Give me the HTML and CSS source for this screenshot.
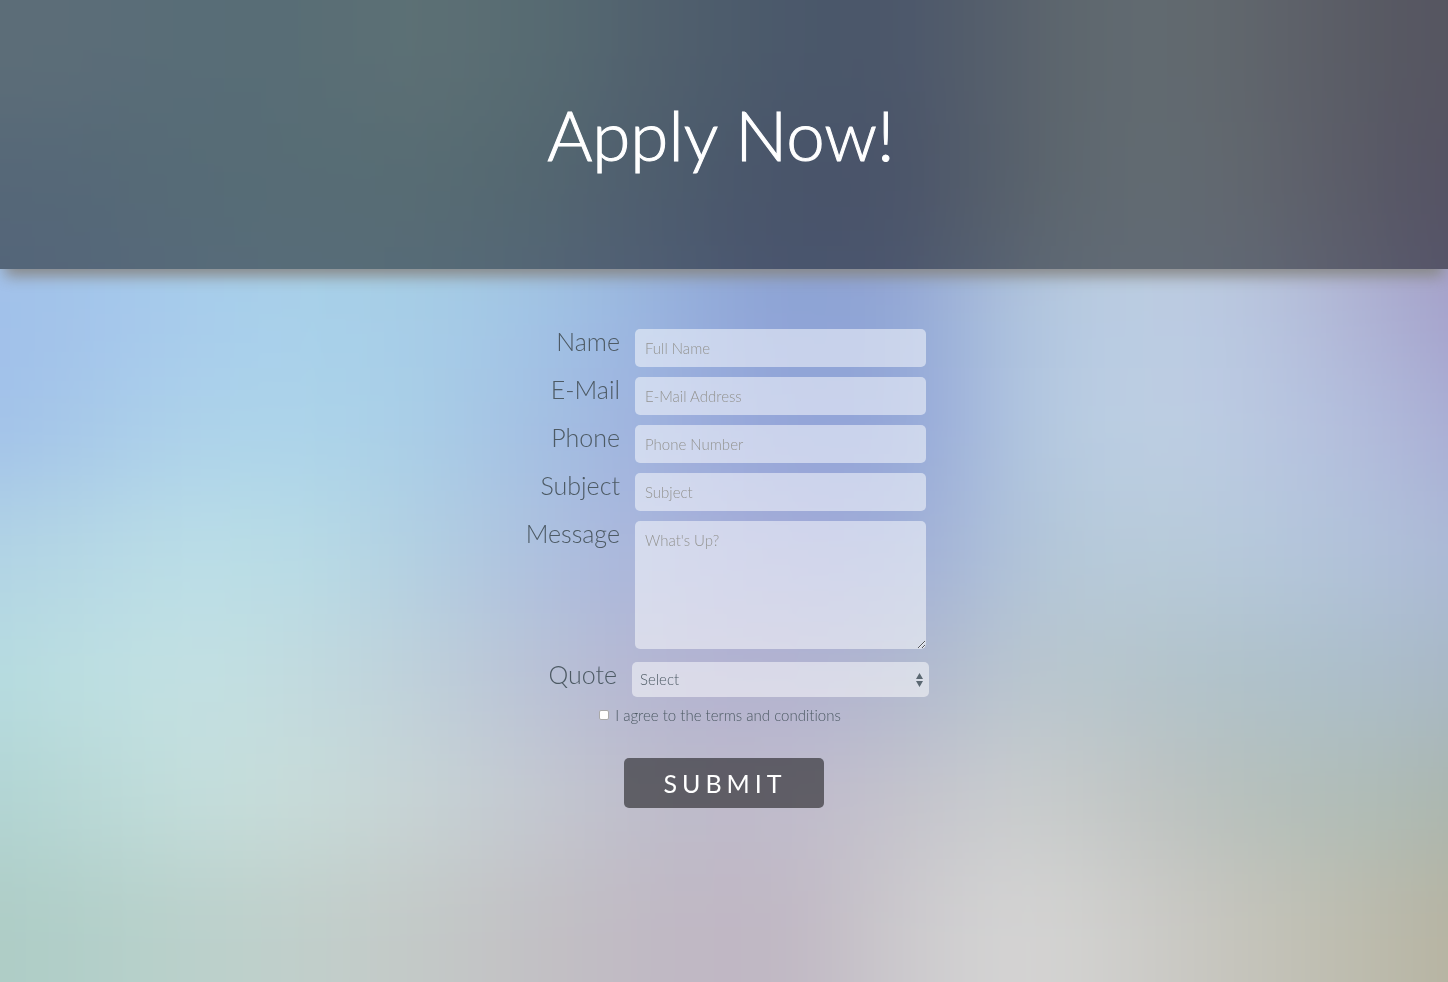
FILE: index.html
```html
<!DOCTYPE html>
<html lang="en">
<head>
<meta charset="utf-8">
<meta name="viewport" content="width=device-width, initial-scale=1">
<title>Apply Now!</title>
<link rel="stylesheet" href="styles.css">
</head>
<body>
<div class="backdrop" aria-hidden="true">
  <div class="backdrop-bands">
    <div class="band band-1"></div>
    <div class="band band-2"></div>
    <div class="band band-3"></div>
    <div class="band band-4"></div>
    <div class="band band-5"></div>
    <div class="band band-6"></div>
    <div class="band band-7"></div>
    <div class="band band-8"></div>
  </div>
</div>
<header class="banner">
  <h1 class="banner-title">Apply Now!</h1>
</header>
<main>
  <form class="apply-form">
    <div class="row">
      <label class="row-label" for="name">Name</label>
      <input class="field" id="name" type="text" placeholder="Full Name">
    </div>
    <div class="row">
      <label class="row-label" for="email">E-Mail</label>
      <input class="field" id="email" type="email" placeholder="E-Mail Address">
    </div>
    <div class="row">
      <label class="row-label" for="phone">Phone</label>
      <input class="field" id="phone" type="tel" placeholder="Phone Number">
    </div>
    <div class="row">
      <label class="row-label" for="subject">Subject</label>
      <input class="field" id="subject" type="text" placeholder="Subject">
    </div>
    <div class="row">
      <label class="row-label" for="message">Message</label>
      <textarea class="field field-message" id="message" placeholder="What's Up?"></textarea>
    </div>
    <div class="row row-quote">
      <label class="row-label" for="quote">Quote</label>
      <div class="select-wrap">
        <select class="select" id="quote"><option>Select</option></select>
        <svg class="select-arrows" viewBox="0 0 7 14" width="7" height="14" aria-hidden="true"><path d="M3.500 0 7 6H0zM0 8h7L3.500 14z"/></svg>
      </div>
    </div>
    <div class="terms">
      <input class="terms-box" id="terms" type="checkbox">
      <label for="terms">I agree to the terms and conditions</label>
    </div>
    <button class="submit" type="submit">SUBMIT</button>
  </form>
</main>
</body>
</html>
```
FILE: styles.css
```css
*, *::before, *::after { box-sizing: border-box; }

body {
  margin: 0;
  min-height: 100vh;
  background: #b5c0d7;
  color: #4d5a64;
  font-family: Lato, "Open Sans", sans-serif;
  font-weight: 300;
  font-variant-ligatures: none;
}

/* Soft colour field: horizontal gradients stacked and blurred together */
.backdrop {
  position: fixed;
  inset: 0;
  z-index: -1;
  overflow: hidden;
}
.backdrop-bands {
  position: absolute;
  inset: -12.5vh -12.5vw;
  display: flex;
  flex-direction: column;
  filter: blur(48px);
}
.band { flex: 1; }
.band-1, .band-8 { flex: 2; }
.band-1 { background: linear-gradient(90deg, #b1d2e7, #b1d2e7, #b1d2e7, #a9d0e5, #a9d2e1, #b3d8e0, #a6cdda, #9ab7d2, #8ea9cc, #90a5cc, #adbed0, #bed0d9, #b7c0ce, #a7a9bc, #a39fb9, #a39fb9); }
.band-2 { background: linear-gradient(90deg, #a4c6e6, #a4c6e6, #a4c6e6, #a5cee3, #a7d0e1, #a8d0dd, #a0c4d7, #94b1d3, #8aa0ca, #8ea0ca, #adbfd0, #bed0dc, #b9c2d2, #a8a7c2, #a098bc, #a098bc); }
.band-3 { background: linear-gradient(90deg, #9fbeea, #9fbeea, #a2c2eb, #a7cbed, #a8d1ea, #a6cde7, #a1c3e6, #98b2df, #8ca1d5, #91a6d6, #b2c7df, #bdcee4, #b8c5df, #acaed2, #9f99c7, #9f99c7); }
.band-4 { background: linear-gradient(90deg, #a0bfe9, #a0bfe9, #a5c6e9, #add2ea, #acd4ea, #a9cee7, #a3bfe3, #9fb0dd, #93a4d8, #92a5d7, #b3c8e0, #bed0e3, #b9c7e1, #b0badb, #a5a5cf, #a5a5cf); }
.band-5 { background: linear-gradient(90deg, #b0d2e4, #b0d2e4, #b4d6e5, #bbdee7, #b8dce6, #b2cfe2, #adc0df, #aab4db, #a5abd7, #9eadd8, #b2c6d9, #b9ccda, #b5c8db, #b0c0da, #a8b5d3, #a8b5d3); }
.band-6 { background: linear-gradient(90deg, #b2dade, #b2dade, #bbdee1, #c3e1e3, #c2dbdf, #bfd0da, #b9c1d6, #b4b4d1, #b3b2d0, #b0b8cf, #bac7cf, #b4c4cb, #aec1ca, #abbdca, #a5b4c2, #a5b4c2); }
.band-7 { background: linear-gradient(90deg, #afd3d2, #afd3d2, #b6d7d5, #c3dedc, #c8dcd9, #c7d3d5, #c4c8d1, #bdbbca, #c0bbcc, #c4c3cc, #cacece, #bfc3c2, #b4bfba, #aebcb6, #a8b2aa, #a8b2aa); }
.band-8 { background: linear-gradient(90deg, #adccc4, #adccc4, #b0cec8, #bad1cb, #c1cfcb, #c4c9c7, #c2c0c4, #c0b8c4, #bfb6c3, #cccacd, #d6d6d5, #cccbc8, #c3c2b8, #bbbaab, #b3af9b, #b3af9b); }

.banner {
  padding: 93px 26px 92px 20px;
  background: rgba(0, 0, 0, .48);
  box-shadow: 0 12px 14px -5px #888;
  text-align: center;
}
.banner-title {
  margin: 0;
  color: #fff;
  font-size: 69px;
  font-weight: 300;
  line-height: 84px;
  -webkit-text-stroke: 1px #fff;
}

.apply-form {
  display: flex;
  flex-direction: column;
  gap: 10px;
  max-width: 410px;
  margin: 60px auto;
}
.row {
  display: flex;
  justify-content: flex-end;
  align-items: flex-start;
  gap: 15px;
  padding-right: 3px;
}
.row-quote {
  padding-top: 3px;
  padding-right: 0;
}
.row-label {
  font-size: 25px;
  line-height: 25px;
}
.field, .select {
  display: block;
  border: 0;
  border-radius: 5px;
  background: rgba(255, 255, 255, .5);
  color: inherit;
  font: inherit;
  font-size: 15px;
  line-height: 18px;
}
.field {
  width: 291px;
  height: 38px;
  padding: 10px;
}
.field::placeholder {
  color: #939390;
  opacity: 1;
}
.field-message {
  height: 128px;
  resize: both;
}
.select-wrap {
  position: relative;
  width: 297px;
}
.select {
  width: 100%;
  height: 35px;
  padding: 0 8px 2px;
  appearance: none;
}
.select-arrows {
  position: absolute;
  top: 11px;
  right: 6px;
  fill: #5b6872;
  pointer-events: none;
}

.terms {
  display: flex;
  justify-content: center;
  align-items: center;
  gap: 6px;
  padding-right: 8px;
  font-size: 15px;
  line-height: 16px;
}
.terms-box {
  width: 10px;
  height: 10px;
  margin: 0;
  border: 1px solid #aaa;
  border-radius: 2px;
  background: #fff;
  appearance: none;
}
.terms-box:checked { background: #5b6872; }

.submit {
  align-self: center;
  width: 200px;
  height: 50px;
  margin-top: 25px;
  padding: 0 0 0 2px;
  border: 0;
  border-radius: 5px;
  background: rgba(0, 0, 0, .5);
  color: #fff;
  font: inherit;
  font-size: 25px;
  font-weight: 400;
  letter-spacing: 5px;
}
```
